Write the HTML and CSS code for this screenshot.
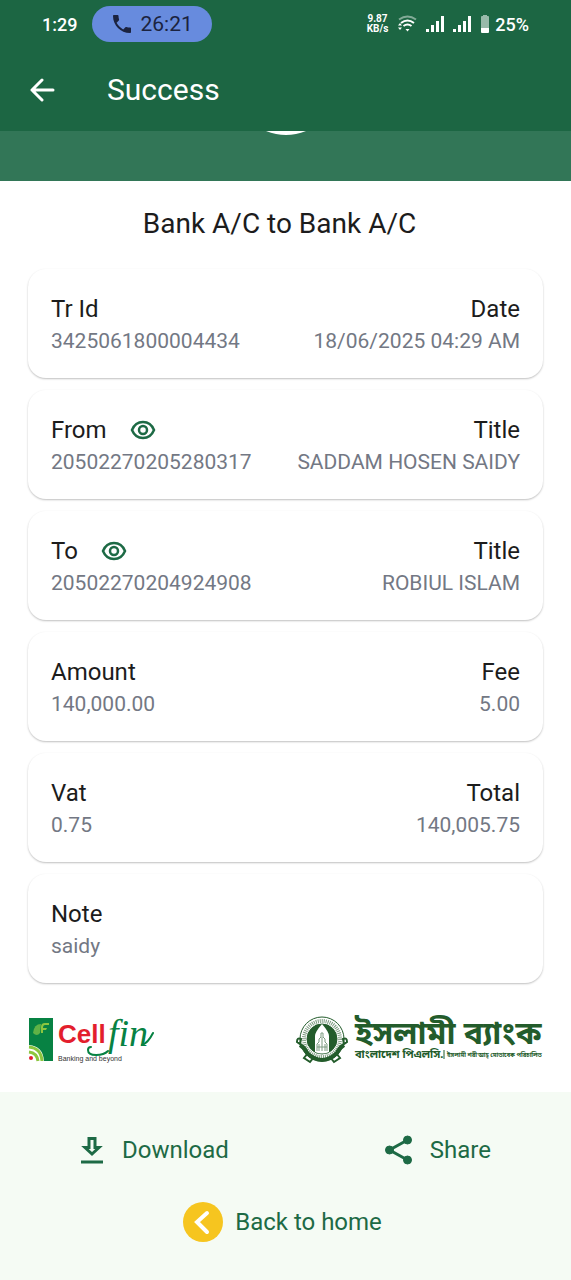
FILE: index.html
```
<!DOCTYPE html>
<html lang="en">
<head>
    <meta charset="UTF-8">
    <meta name="viewport" content="width=device-width, initial-scale=1.0">
    <title>Success</title>
    <link rel="stylesheet" href="styles.css">
</head>
<body>

    <header class="header">
        <div class="status">
            <span class="clock">1:29</span>
            <span class="call">
                <svg width="24" height="24" viewBox="0 0 24 24" fill="#1b2340"><path d="M6.62 10.79c1.44 2.83 3.76 5.14 6.59 6.59l2.2-2.2c.27-.27.67-.36 1.02-.24 1.12.37 2.33.57 3.57.57.55 0 1 .45 1 1V20c0 .55-.45 1-1 1C10.61 21 3 13.39 3 4c0-.55.45-1 1-1h3.500c.55 0 1 .45 1 1 0 1.250.2 2.450.57 3.570.11.35.03.74-.25 1.020l-2.200 2.200z"/></svg>
                26:21
            </span>
            <span class="indicators">
                <span class="speed">9.87<br>KB/s</span>
                <svg width="20" height="20" viewBox="0 0 20 20" fill="none" stroke="#fff" stroke-width="2">
                    <path d="M2 5.500Q10.500-.5 19 5.500" opacity=".45"/>
                    <path d="M4 9Q10.500 4 17 9M6.500 12Q10.500 9 14.500 12"/>
                    <path d="M10.500 17.500l-2-2.500h4zM1 11.500l2-2.500 2 2.500zM1 13.500l2 2.500 2-2.500z" fill="#fff" stroke="none"/>
                </svg>
                <svg width="18" height="18" viewBox="0 0 18 18" fill="#fff"><path d="M0 14h3v3H0zM5 10h3v7H5zM10 6h3v11h-3zM15 1h3v16h-3z"/></svg>
                <svg width="18" height="18" viewBox="0 0 18 18" fill="#fff"><path d="M0 14h3v3H0zM5 10h3v7H5zM10 6h3v11h-3zM15 1h3v16h-3z"/></svg>
                <svg width="10" height="20" viewBox="0 0 10 20" fill="#fff"><path d="M3 1h4v1h1q1 0 1 1v11H1V3q0-1 1-1h1z" opacity=".55"/><path d="M1 14h8v4q0 1-1 1H2q-1 0-1-1z"/></svg>
                <span class="battery">25%</span>
            </span>
        </div>
        <div class="appbar">
            <button class="back" aria-label="Back">
                <svg width="26" height="24" viewBox="0 0 26 24" fill="none" stroke="#fff" stroke-width="3" stroke-linecap="round" stroke-linejoin="round"><path d="M24 12H3M13 2L3 12l10 10"/></svg>
            </button>
            <h1>Success</h1>
        </div>
    </header>

    <div class="banner">
        <svg width="40" height="4" viewBox="0 0 40 4" fill="#fff"><path d="M0 0h40Q30 4 20 4T0 0z"/></svg>
    </div>

    <main class="receipt">
        <h2>Bank A/C to Bank A/C</h2>

        <div class="cards">
            <dl class="card">
                <div><dt>Tr Id</dt><dd>3425061800004434</dd></div>
                <div><dt>Date</dt><dd>18/06/2025 04:29 AM</dd></div>
            </dl>
            <dl class="card">
                <div>
                    <dt>From
                        <button class="eye" aria-label="Show sender account">
                            <svg width="26" height="20" viewBox="0 0 26 20" fill="none" stroke="#1d6a45" stroke-width="2.500"><path d="M2 10C4 5 8 2 13 2s9 3 11 8c-2 5-6 8-11 8S4 15 2 10z"/><circle cx="13" cy="10" r="4"/></svg>
                        </button>
                    </dt>
                    <dd>20502270205280317</dd>
                </div>
                <div><dt>Title</dt><dd>SADDAM HOSEN SAIDY</dd></div>
            </dl>
            <dl class="card">
                <div>
                    <dt>To
                        <button class="eye" aria-label="Show receiver account">
                            <svg width="26" height="20" viewBox="0 0 26 20" fill="none" stroke="#1d6a45" stroke-width="2.500"><path d="M2 10C4 5 8 2 13 2s9 3 11 8c-2 5-6 8-11 8S4 15 2 10z"/><circle cx="13" cy="10" r="4"/></svg>
                        </button>
                    </dt>
                    <dd>20502270204924908</dd>
                </div>
                <div><dt>Title</dt><dd>ROBIUL ISLAM</dd></div>
            </dl>
            <dl class="card">
                <div><dt>Amount</dt><dd>140,000.00</dd></div>
                <div><dt>Fee</dt><dd>5.00</dd></div>
            </dl>
            <dl class="card">
                <div><dt>Vat</dt><dd>0.75</dd></div>
                <div><dt>Total</dt><dd>140,005.75</dd></div>
            </dl>
            <dl class="card">
                <div><dt>Note</dt><dd>saidy</dd></div>
            </dl>
        </div>

        <div class="logos">
            <svg class="cellfin" width="126" height="50" viewBox="0 0 126 50">
                <path d="M1 3h24v43H1z" fill="#078243"/>
                <path d="M5 18Q6 9 13 9l-1 9q-3 4-7 0z" fill="#5fb246"/>
                <path d="M13 18V12q0-4 4-4h4v2h-4q-2 0-2 3h4l-1 2h-3v3z" fill="#8cc63f"/>
                <path d="M1 30q14 1 15 16H1z" fill="#fff"/>
                <path d="M1 32q12 1 13 14M1 37q8 1 9 9" fill="none" stroke="#8cc63f" stroke-width="3"/>
                <circle cx="3" cy="43" r="2" fill="#e31e2d"/>
                <text x="30" y="28" class="logo-cell">Cell</text>
                <text x="80" y="31" class="logo-fin">fin</text>
                <path d="M80 36C75 41 60 42 60 35q0-3 3-3M114 30q6-2 11-12" fill="none" stroke="#078243" stroke-width="2" stroke-linecap="round"/>
                <text x="30" y="46" class="logo-tag">Banking and beyond</text>
            </svg>
            <svg class="ibbl" width="248" height="50" viewBox="0 0 248 50">
                <g fill="none" stroke="#235c2b">
                    <circle cx="27" cy="24" r="22" stroke-width="1"/>
                    <circle cx="27" cy="24" r="18" stroke-width="4" stroke="#7d9b80" stroke-dasharray="1 1"/>
                    <circle cx="27" cy="24" r="15" fill="#235c2b"/>
                    <path d="M5 30q5 3 7 8 7 7 15 7t15-7q2-5 7-8" stroke-width="4"/>
                    <path d="M2 27q0-5 4-3l-1 5zM52 27q0-5-4-3l1 5zM13 38l-4 5 6 4 4-5M41 38l4 5-6 4-4-5" stroke-width="2"/>
                </g>
                <path d="M20 37V21q0-4 7-12 7 8 7 12v16q-7 3-14 0z" fill="#fff"/>
                <path d="M22 36v-7l2-2v-3l2-2v-4h2v4l2 2v3l2 2v7M24 36v-7M27 36V22M30 36v-7M22 32h10" fill="none" stroke="#7d9b80"/>
                <text x="60" y="29" class="logo-bank">ইসলামী ব্যাংক</text>
                <text x="60" y="43" class="logo-plc">বাংলাদেশ পিএলসি.</text>
                <path d="M149 35v9" stroke="#235c2b"/>
                <text x="152" y="42" class="logo-sharia">ইসলামী শরী‘আহ্ মোতাবেক পরিচালিত</text>
            </svg>
        </div>
    </main>

    <footer class="actions">
        <div class="row">
            <button class="action">
                <svg width="24" height="28" viewBox="0 0 24 28" fill="none" stroke="#1d6a45" stroke-width="3"><path d="M9 2.500h6v9h4L12 18l-7-6.500h4zM1 26h22"/></svg>
                Download
            </button>
            <button class="action">
                <svg width="27" height="30" viewBox="0.5 0 27 30" fill="#1d6a45" stroke="#1d6a45"><path d="M23 5L5 15l18 10" fill="none" stroke-width="3"/><circle cx="23" cy="5" r="4"/><circle cx="5" cy="15" r="4"/><circle cx="23" cy="25" r="4"/></svg>
                Share
            </button>
        </div>
        <button class="action home">
            <svg width="40" height="40" viewBox="0 0 40 40"><circle cx="20" cy="20" r="20" fill="#f6c51f"/><path d="M24 11l-10 9 10 10" fill="none" stroke="#fff" stroke-width="4" stroke-linecap="round"/></svg>
            Back to home
        </button>
    </footer>

</body>
</html>
```
FILE: styles.css
```
* {
    box-sizing: border-box;
}
body {
    margin: 0;
    min-height: 100vh;
    display: flex;
    flex-direction: column;
    font-family: Roboto, sans-serif;
    background-color: #fff;
    color: #1c1c1c;
}
svg {
    display: block;
    flex-shrink: 0;
}
h1, h2, dl, dd {
    margin: 0;
    font-weight: 400;
}
button {
    border: none;
    background: none;
    padding: 0;
    font-family: inherit;
    color: inherit;
    cursor: pointer;
}
.header {
    background-color: #1c6643;
    color: #fff;
}
.status {
    display: flex;
    align-items: center;
    height: 48px;
    padding: 0 42px;
}
.clock, .battery {
    font-size: 18px;
    font-weight: 500;
}
.call {
    display: flex;
    align-items: center;
    gap: 6px;
    height: 36px;
    margin-left: 15px;
    padding: 0 19px 0 18px;
    border-radius: 18px;
    background-color: #678bde;
    color: #1b2340;
    font-size: 21px;
}
.indicators {
    display: flex;
    align-items: center;
    gap: 9px;
    margin-left: auto;
}
.speed {
    font-size: 10px;
    line-height: 10px;
    font-weight: 700;
    text-align: center;
}
.battery {
    margin-left: -4px;
}
.appbar {
    display: flex;
    align-items: center;
    gap: 52px;
    height: 83px;
    padding: 0 29px;
}
.appbar h1 {
    font-size: 30px;
    line-height: 36px;
}
.banner {
    display: flex;
    justify-content: center;
    height: 50px;
    background-color: #327657;
}
.receipt {
    padding: 25px 28px 27px;
}
.receipt h2 {
    padding-right: 12px;
    font-size: 28px;
    line-height: 36px;
    text-align: center;
}
.cards {
    display: flex;
    flex-direction: column;
    gap: 12px;
    margin-top: 27px;
}
.card {
    display: flex;
    justify-content: space-between;
    padding: 24px 23px 21px;
    border-radius: 18px;
    background-color: #fff;
    box-shadow: 0 1px 2px rgba(0, 0, 0, 0.25);
}
.card div:nth-child(2) {
    text-align: right;
}
.card dt {
    font-size: 24px;
    line-height: 32px;
}
.card dd {
    color: #737884;
    font-size: 21px;
    line-height: 32px;
}
.eye {
    display: inline-block;
    margin-left: 17px;
    vertical-align: -2px;
}
.logos {
    display: flex;
    justify-content: space-between;
    margin-top: 32px;
}
.logo-cell {
    font: 700 26px "Liberation Sans", sans-serif;
    fill: #e31e2d;
}
.logo-fin {
    font: italic 38px "Liberation Serif", serif;
    fill: #078243;
}
.logo-tag {
    font: 7px "Liberation Sans", sans-serif;
    fill: #333;
}
.logo-bank, .logo-plc, .logo-sharia {
    font-family: "Noto Sans Bengali", "Noto Sans", sans-serif;
    font-weight: 700;
    fill: #235c2b;
}
.logo-bank {
    font-size: 32px;
}
.logo-plc {
    font-size: 11px;
}
.logo-sharia {
    font-size: 6px;
}
.actions {
    flex: 1;
    display: flex;
    flex-direction: column;
    align-items: center;
    gap: 32px;
    padding: 38px 28px;
    background-color: #f5fbf4;
    color: #1d6a45;
}
.row {
    display: flex;
    justify-content: space-between;
    width: 100%;
    padding: 0 52px;
}
.action {
    display: flex;
    align-items: center;
    gap: 18px;
    height: 40px;
    font-size: 24px;
}
.home {
    gap: 12px;
    padding-right: 6px;
}
```
